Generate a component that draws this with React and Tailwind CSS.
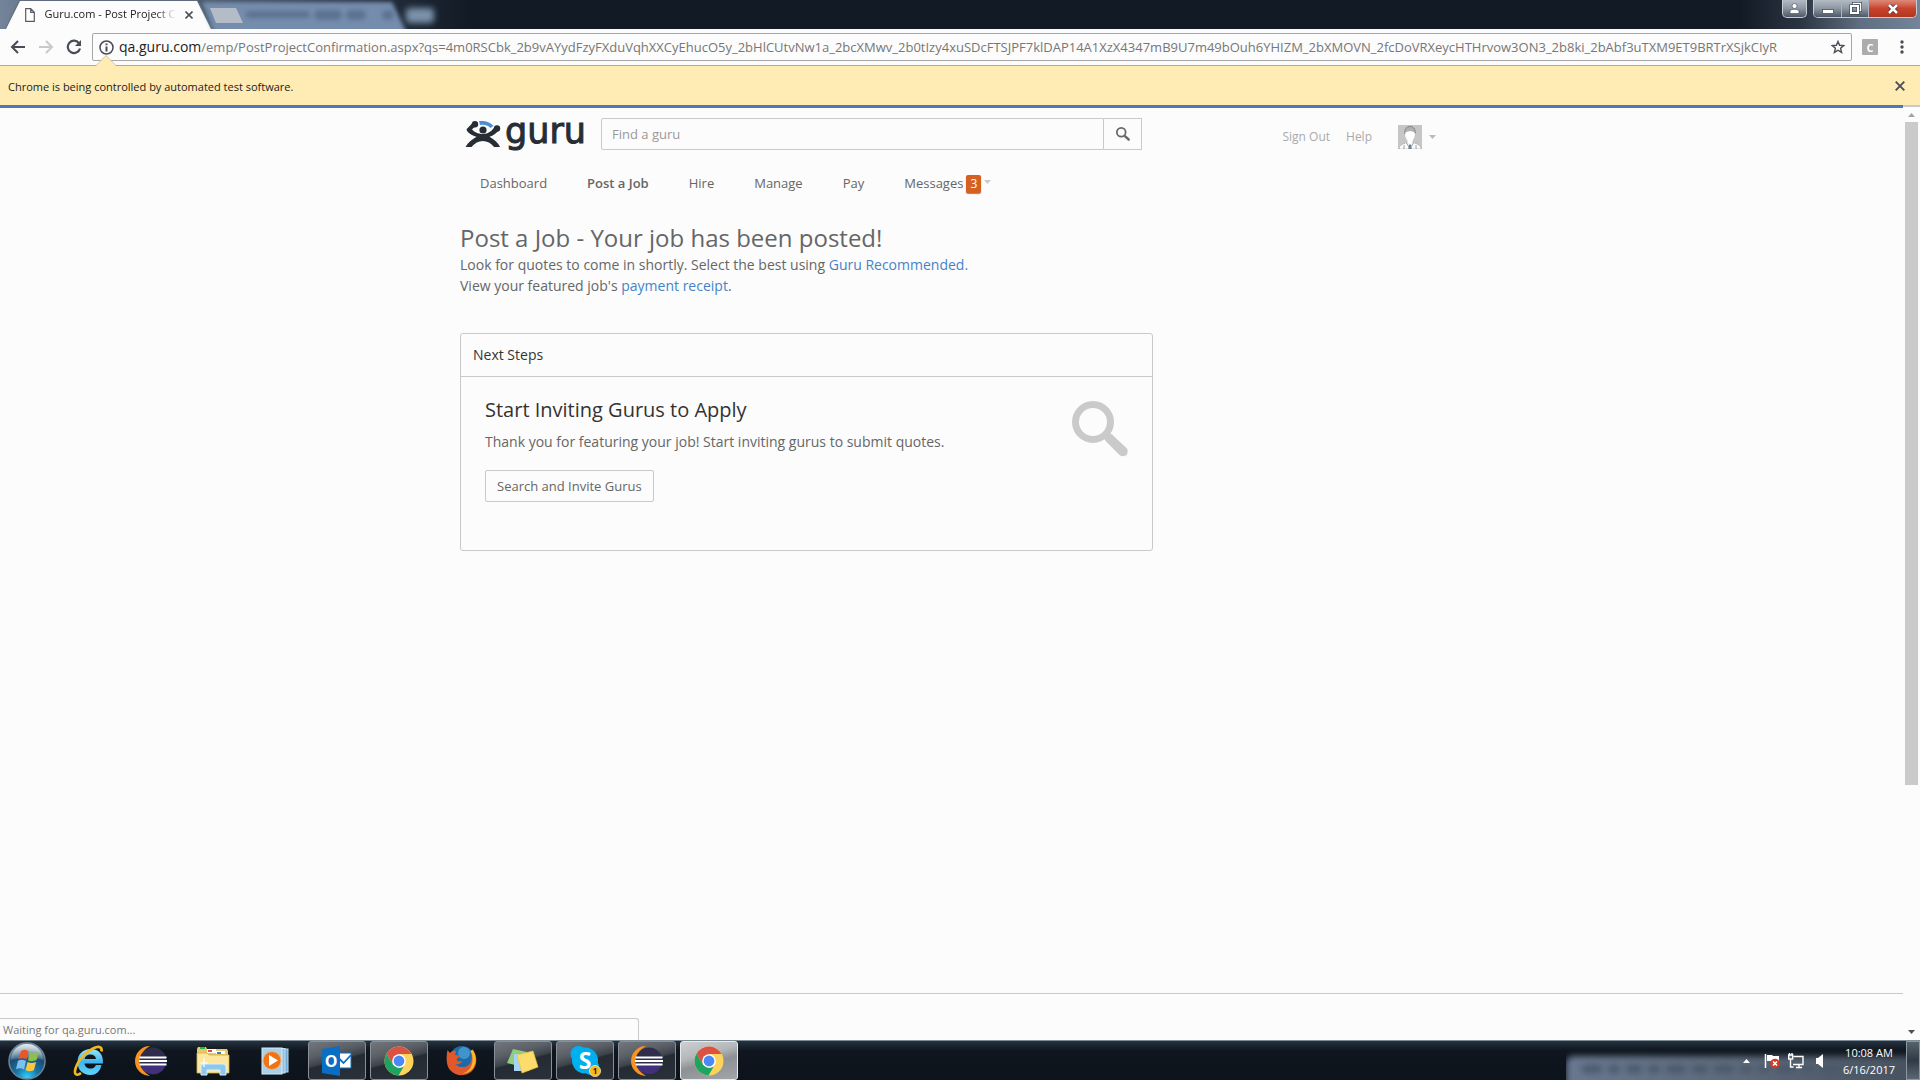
import React from "react";

const uiFont = "font-['Open_Sans','Noto_Sans',sans-serif]";

function Caret({ className = "" }) {
  return (
    <svg className={className} width="7" height="4" viewBox="0 0 7 4" aria-hidden="true">
      <path d="M0 0h7L3.500 4z" fill="currentColor" />
    </svg>
  );
}

function WindowButtons() {
  const glass =
    "flex items-center justify-center bg-gradient-to-b from-[#b4bcc4] via-[#8c96a2] to-[#4d5866]";
  return (
    <div className="flex items-start gap-[6px] pr-[3px]">
      <button
        aria-label="Profile"
        className={`h-[18px] w-[25px] rounded-b-[5px] border border-t-0 border-[#c5cdd6] ${glass}`}
      >
        <svg width="11" height="11" viewBox="0 0 11 11" fill="#fff" stroke="#3d4856" strokeWidth=".6">
          <circle cx="5.500" cy="3" r="2.500" />
          <path d="M1 10.500V8.500C1 7 3 6.300 5.500 6.300S10 7 10 8.500v2z" />
        </svg>
      </button>
      <div className="flex h-[18px] overflow-hidden rounded-b-[5px] border border-t-0 border-[#c5cdd6]">
        <button aria-label="Minimize" className={`w-7 border-r border-[#a9b3bd] ${glass}`}>
          <svg width="12" height="12" viewBox="0 0 12 12">
            <rect x=".500" y="6.500" width="11" height="4" fill="#fff" stroke="#47525f" strokeWidth=".8" />
          </svg>
        </button>
        <button aria-label="Restore" className={`w-[27px] border-r border-[#a9b3bd] ${glass}`}>
          <svg width="13" height="13" viewBox="0 0 13 13" fill="none">
            <path d="M4.500 3V1.500h7v7H10" stroke="#3d4856" strokeWidth="3" />
            <path d="M4.500 3V1.500h7v7H10" stroke="#fff" strokeWidth="1.500" />
            <rect x="2" y="4" width="7" height="7" stroke="#3d4856" strokeWidth="3.200" />
            <rect x="2" y="4" width="7" height="7" stroke="#fff" strokeWidth="2" />
          </svg>
        </button>
        <button
          aria-label="Close"
          className="flex w-[47px] items-center justify-center bg-gradient-to-b from-[#dc8a78] via-[#c8432d] to-[#b3361f]"
        >
          <svg width="12" height="10" viewBox="0 0 12 10">
            <path d="M2 1l8 8M10 1L2 9" stroke="#4a2a2a" strokeWidth="4" />
            <path d="M2 1l8 8M10 1L2 9" stroke="#fff" strokeWidth="2.600" />
          </svg>
        </button>
      </div>
    </div>
  );
}

function TabStrip() {
  return (
    <div className="flex h-[29px] items-stretch overflow-hidden bg-[linear-gradient(90deg,#74859b_0px,#65758a_30px,#4a5868_210px,#222c3a_390px,#121a25_470px,#121a25_calc(100%_-_180px),#2b3441_calc(100%_-_120px),#5f6e80_calc(100%_-_60px),#74859a_100%)]">
      <div className="ml-[5px] flex w-[207px] flex-none items-stretch bg-[#5f6c7d] [clip-path:polygon(0_100%,14px_0,193px_0,100%_100%)]">
        <div className="flex w-full items-center justify-between bg-[#fcfcfc] pl-5 pr-[19px] [clip-path:polygon(1px_100%,15px_1px,192px_1px,206px_100%)]">
          <svg className="flex-none" width="10" height="14" viewBox="0 0 10 14" fill="#fff" stroke="#555b66" strokeWidth="1.200">
            <path d="M.700.700h5l3.600 3.600v9H.700zM5.700.700v3.600h3.600" />
          </svg>
          <span className="whitespace-nowrap text-[11px] text-[#222] [mask-image:linear-gradient(90deg,#000_85%,transparent_100%)]">
            Guru.com - Post Project C
          </span>
          <button aria-label="Close tab" className="flex-none">
            <svg width="8" height="8" viewBox="0 0 8 8" stroke="#4c525c" strokeWidth="1.600">
              <path d="M.500.500l7 7M7.500.500l-7 7" />
            </svg>
          </button>
        </div>
      </div>
      <div className="relative -ml-[10px] w-[205px] flex-none">
        <div className="absolute inset-x-0 -bottom-1 top-[2px] blur-[2px]">
          <div className="h-full bg-[#758dad] [clip-path:polygon(0_0,190px_0,100%_100%,12px_100%)]" />
        </div>
        <div className="relative flex h-full items-center gap-1 pl-[44px] text-[#5d7392] blur-[2px]">
          <div className="h-[7px] w-16 rounded-full bg-current" />
          <div className="h-[10px] w-7 rounded-full bg-current" />
          <div className="h-[10px] w-5 rounded-full bg-current" />
          <div className="ml-3 h-[10px] w-3 rounded-full bg-current" />
        </div>
        <button
          aria-label="New tab"
          className="absolute left-[8px] top-[8px] h-[15px] w-[33px] bg-[#b4bcc8] [clip-path:polygon(0_0,26px_0,100%_100%,6px_100%)]"
        />
      </div>
      <div className="-ml-[1px] mt-[8px] h-[15px] w-7 flex-none rounded bg-[#7b92ab] blur-[3px]" />
      <div className="flex-1" />
      <WindowButtons />
    </div>
  );
}

function Toolbar() {
  return (
    <div className="flex h-[37px] items-center border-b border-[#a9a9a9] bg-[#fcfcfc] pr-2">
      <button aria-label="Back" className="ml-[10px]">
        <svg width="16" height="14" viewBox="0 0 16 14" fill="none" stroke="#474c57" strokeWidth="2">
          <path d="M15 7H2M8 1L2 7l6 6" />
        </svg>
      </button>
      <button aria-label="Forward" className="ml-3">
        <svg width="16" height="14" viewBox="0 0 16 14" fill="none" stroke="#c9c9c9" strokeWidth="2">
          <path d="M1 7h13M8 1l6 6-6 6" />
        </svg>
      </button>
      <button aria-label="Reload" className="ml-3">
        <svg width="16" height="16" viewBox="0 0 16 16" fill="none" stroke="#474c57" strokeWidth="2.200">
          <path d="M13.200 4.500A6.200 6.200 0 1 0 14 9.500" />
          <path d="M15 1v6H9z" fill="#474c57" stroke="none" />
        </svg>
      </button>
      <div className="ml-[10px] flex h-7 min-w-0 flex-1 items-center rounded-[2px] border border-[#a6a6a6] px-[6px]">
        <svg className="flex-none" width="15" height="15" viewBox="0 0 15 15" fill="none" stroke="#474c57">
          <circle cx="7.500" cy="7.500" r="6.500" strokeWidth="1.500" />
          <path d="M7.500 3.500v1.800M7.500 6.500v5" strokeWidth="2" />
        </svg>
        <label className="ml-[5px] flex min-w-0 flex-1 items-baseline text-[14px] text-[#222]">
          qa.guru.com
          <input
            className="min-w-0 flex-1 bg-transparent text-[13px] text-[#777] outline-none"
            defaultValue="/emp/PostProjectConfirmation.aspx?qs=4m0RSCbk_2b9vAYydFzyFXduVqhXXCyEhucO5y_2bHlCUtvNw1a_2bcXMwv_2b0tIzy4xuSDcFTSJPF7klDAP14A1XzX4347mB9U7m49bOuh6YHIZM_2bXMOVN_2fcDoVRXeycHTHrvow3ON3_2b8ki_2bAbf3uTXM9ET9BRTrXSjkCIyR"
          />
        </label>
        <button aria-label="Bookmark this page" className="ml-[9px] flex-none">
          <svg width="14" height="14" viewBox="0 0 14 14" fill="none" stroke="#474c57" strokeWidth="1.400">
            <path d="M7 1.500l1.600 3.800 4.200.3-3.200 2.700 1 4.100L7 10.200l-3.600 2.200 1-4.100L1.200 5.600l4.200-.3z" />
          </svg>
        </button>
      </div>
      <button
        aria-label="Extension"
        className="ml-[10px] flex size-4 items-center justify-center rounded-[1px] bg-[#acacac] text-[11px] font-bold leading-none text-white"
      >
        C
      </button>
      <button aria-label="Menu" className="ml-[14px] flex w-5 justify-center">
        <svg width="4" height="14" viewBox="0 0 4 14" fill="#474c57">
          <circle cx="2" cy="2" r="1.700" />
          <circle cx="2" cy="7" r="1.700" />
          <circle cx="2" cy="12" r="1.700" />
        </svg>
      </button>
    </div>
  );
}

function InfoBar() {
  return (
    <div className="relative flex h-[39px] items-center justify-between bg-[#ffebb4] pl-2 pr-[15px]">
      <svg className="absolute -top-[11px] left-[96px]" width="20" height="11" viewBox="0 0 20 11">
        <path d="M0 11L10 0l10 11z" fill="#ffebb4" />
        <path d="M0 10.500L10 .500l10 10" fill="none" stroke="#c9bd9c" strokeWidth=".8" />
      </svg>
      <span className="pt-[3px] text-[11px] text-[#222]">Chrome is being controlled by automated test software.</span>
      <button aria-label="Dismiss">
        <svg width="10" height="10" viewBox="0 0 10 10" stroke="#474c57" strokeWidth="1.800">
          <path d="M.700.700l8.600 8.600M9.300.700L.700 9.300" />
        </svg>
      </button>
    </div>
  );
}

function GuruLogo() {
  return (
    <a href="#home" aria-label="guru home" className="flex h-[34px] w-[125px] flex-none items-center">
      <svg className="flex-none" width="36" height="27" viewBox="0 0 36 27" fill="#262d35">
        <path d="M14 0c6-.6 11 1.300 14.500 4.800L25.500 7C23 4.500 19 3.300 15 4z" fill="#4a8fd6" />
        <circle cx="18" cy="9" r="3.600" />
        <circle cx="10" cy="3.300" r="3.200" />
        <circle cx="32" cy="7.500" r="3.200" />
        <path d="M8 1.500L1.500 8.200c.5 3.300 5.500 6.200 10 7.500C7.500 18 3 21.500.500 26h6c3.200-3.700 7-6 11.300-6s8.300 2.300 11.300 6h6C33 21.500 28.500 18 24.500 15.700c3.500-1.200 7-3 9.500-7l-4-3.200C27.500 9.500 23 13 18 13S8.300 10.500 7 8.200l5-4z" />
      </svg>
      <span className="ml-1 h-[34px] font-['DejaVu_Sans',sans-serif] text-[35px] leading-[29px] text-[#262d35] [-webkit-text-stroke:1px_#262d35]">
        guru
      </span>
    </a>
  );
}

function Avatar() {
  return (
    <svg width="24" height="24" viewBox="0 0 24 24" aria-hidden="true">
      <rect width="24" height="24" fill="#c6c6c6" />
      <path d="M1 24c0-4 4-5 8-6.500L12 19l3-1.500c4 1.500 8 2.500 8 6.500z" fill="#fcfcfc" stroke="#8b8b8b" strokeWidth=".7" strokeDasharray="1.500 1" />
      <path d="M7 9c-1-5 1.500-7.500 5-7.500S18 4 17 9" fill="#b0b0b0" stroke="#777" strokeWidth="1" strokeDasharray="1.500 .6" />
      <path d="M7.500 7.500C10 6 14 5.500 16.500 7.500c1 3-.5 6.500-2 8v2.500L12 20l-2.500-2v-2.500c-1.500-1.500-3-5-2-8z" fill="#fff" />
      <path d="M11 19.500h2l.8 4.500h-3.600z" fill="#71839a" />
      <path d="M6 20v4M18 20v4M8.500 18l2.500 4M15.500 18L13 22" stroke="#888" strokeWidth=".8" />
    </svg>
  );
}

function Magnifier({ size, className }) {
  return (
    <svg className={className} width={size} height={size} viewBox="0 0 56 56" aria-hidden="true">
      <circle cx="21" cy="21" r="17.500" fill="none" stroke="currentColor" strokeWidth="7" />
      <path d="M32 37l5-5 3 1.500L54.500 47c1.500 1.500 1.500 4 .5 6.200-2 2.500-5.500 2.500-7.500.8L34 40.500z" fill="currentColor" />
    </svg>
  );
}

const navItems = ["Dashboard", "Post a Job", "Hire", "Manage", "Pay"];

function GuruPage() {
  return (
    <div className="relative flex min-w-0 flex-1 flex-col border-t-[3px] border-[#4a7ab8] bg-[#fcfcfc] text-[#666]">
      <div className="mx-auto w-full max-w-[983px] flex-1">
        <header>
          <div className="flex h-[52px] items-center pr-[7px]">
            <div className="ml-[5px]">
              <GuruLogo />
            </div>
            <form className="ml-[11px] flex h-8 w-[541px]" onSubmit={(e) => e.preventDefault()}>
              <input
                aria-label="Find a guru"
                placeholder="Find a guru"
                className="min-w-0 flex-1 rounded-l-[2px] border border-[#c9c9c9] bg-transparent pl-[10px] pt-px text-[13px] outline-none placeholder:text-[#999]"
              />
              <button
                aria-label="Search"
                className="flex w-[38px] items-center justify-center border border-l-0 border-[#c9c9c9] text-[#666]"
              >
                <Magnifier size={14} />
              </button>
            </form>
            <div className="ml-auto flex items-center pt-[6px] text-[12px] text-[#aaa]">
              <a href="#signout">Sign Out</a>
              <a href="#help" className="ml-4">Help</a>
              <button aria-label="Account" className="ml-[26px] flex items-center">
                <Avatar />
                <Caret className="ml-[7px] text-[#bbb]" />
              </button>
            </div>
          </div>
          <nav className="flex h-[47px] items-center text-[13px]">
            {navItems.map((item) => (
              <a
                key={item}
                href="#nav"
                className={item === "Post a Job" ? "px-5 font-semibold" : "px-5"}
              >
                {item}
              </a>
            ))}
            <a href="#messages" className="flex items-center pl-5">
              Messages
              <span className="ml-[3px] flex h-[18px] w-[15px] items-center justify-center rounded-[2px] bg-[#d5601f] text-[12px] text-white shadow-[0_1px_1px_#888]">
                3
              </span>
              <Caret className="mb-1 ml-[3px] text-[#c9c9c9]" />
            </a>
          </nav>
        </header>
        <main>
          <h1 className="mt-[15px] text-[24px] leading-8">Post a Job - Your job has been posted!</h1>
          <div className="text-[14px] leading-[21px]">
            <p>
              Look for quotes to come in shortly. Select the best using{" "}
              <a href="#recommended" className="text-[#4583c8]">Guru Recommended.</a>
            </p>
            <p>
              View your featured job's{" "}
              <a href="#receipt" className="text-[#4583c8]">payment receipt</a>.
            </p>
          </div>
          <section className="mt-[37px] min-h-[218px] w-[693px] max-w-full rounded-[3px] border border-[#c9c9c9]">
            <h2 className="flex h-[43px] items-center border-b border-[#c9c9c9] px-3 pb-[2px] text-[14px] text-[#333]">
              Next Steps
            </h2>
            <div className="flex items-start justify-between px-6 pt-[17px]">
              <div>
                <h3 className="text-[20px] leading-8 text-[#333]">Start Inviting Gurus to Apply</h3>
                <p className="mt-[5px] text-[14px] leading-[21px]">
                  Thank you for featuring your job! Start inviting gurus to submit quotes.
                </p>
                <button className="mt-[18px] h-8 rounded-[2px] border border-[#c9c9c9] px-[11px] pt-px text-[13px]">
                  Search and Invite Gurus
                </button>
              </div>
              <Magnifier size={56} className="mt-[7px] text-[#cacaca]" />
            </div>
          </section>
        </main>
      </div>
      <footer className="h-[47px] flex-none border-t border-[#c9c9c9]" />
      <div className="absolute bottom-0 left-0 flex h-[22px] w-[639px] items-center rounded-tr-[3px] border-r border-t border-[#c9c9c9] bg-[#fcfcfc] pl-[3px] pt-[2px] text-[11px] text-[#777]">
        Waiting for qa.guru.com...
      </div>
    </div>
  );
}

function ScrollBar() {
  return (
    <div className="flex w-[17px] flex-none flex-col items-center border-t-2 border-[#c9c9c9] bg-[#fcfcfc] py-[6px]">
      <Caret className="rotate-180 text-[#a5a5a5]" />
      <div className="mt-[5px] flex w-full flex-1 flex-col px-[2px]">
        <div className="basis-[73%] bg-[#cacaca]" />
      </div>
      <Caret className="text-[#505050]" />
    </div>
  );
}

function StartOrb() {
  return (
    <svg width="38" height="38" viewBox="0 0 38 38">
      <defs>
        <radialGradient id="orb" cx=".5" cy=".95" r=".9">
          <stop offset="0" stopColor="#2fd0ff" />
          <stop offset=".35" stopColor="#1776a8" />
          <stop offset=".7" stopColor="#1b4a70" />
          <stop offset="1" stopColor="#8ea7b8" />
        </radialGradient>
        <linearGradient id="orbShine" x2="0" y2="1">
          <stop offset="0" stopColor="#fff" stopOpacity=".75" />
          <stop offset="1" stopColor="#fff" stopOpacity=".15" />
        </linearGradient>
      </defs>
      <circle cx="19" cy="19" r="18" fill="url(#orb)" stroke="#6b8497" strokeWidth="1.500" />
      <path d="M3 18a16 16 0 0 1 32 0c-10-3-22-3-32 0z" fill="url(#orbShine)" />
      <path d="M13 9c3-1.800 5-1.300 7.500.2L18.500 17.500c-2.500-1.600-5-1.700-8-.5z" fill="#e8572b" />
      <path d="M21.800 10c3 1.600 5.500 1.500 9-.2L28.600 18c-3.500 1.500-6 1.500-8.600.2z" fill="#8cc04b" />
      <path d="M10 18.700c3-1.300 5.500-1 8 .4l-2 8.400c-2.600-1.700-5-1.800-8-.3z" fill="#7fc0ee" />
      <path d="M19.600 19.900c2.600 1.400 5 1.400 8.500.1l-2.200 8.200c-3.200 1.500-6 1.300-8.400-.2z" fill="#fbc63f" />
    </svg>
  );
}

function IeIcon() {
  return (
    <svg width="32" height="32" viewBox="0 0 32 32" fill="none">
      <defs>
        <linearGradient id="ie" x2="0" y2="1">
          <stop offset="0" stopColor="#9be4fb" />
          <stop offset=".5" stopColor="#3fb4ee" />
          <stop offset="1" stopColor="#62d3fa" />
        </linearGradient>
      </defs>
      <path d="M28.500 20H23c-1 2.500-3 3.600-5.500 3.600-3.300 0-5.700-2-6-5.100h18.400C30.600 9.500 26 4 17.600 4 10.500 4 4.500 9 4.500 17S10 30 17.500 30c5.700 0 9.500-3.300 11-10zM11.600 14c.6-2.800 2.700-4.500 5.800-4.500 3.200 0 5.300 1.700 5.600 4.500z" fill="url(#ie)" />
      <path d="M8 28c-3.500 3-6.500 2-6-2C3 18 11 8 20 3.500c5-2.500 9.500-2.500 8.500 3" stroke="#f3b81c" strokeWidth="2.600" />
    </svg>
  );
}

function EclipseIcon() {
  return (
    <svg width="32" height="30" viewBox="0 0 32 30">
      <path d="M15 0A15 15 0 0 0 15 30 17 17 0 0 1 15 0z" fill="#f7931e" />
      <circle cx="18" cy="15" r="13.500" fill="#2f2c4c" />
      <path d="M6 20h24a13 13 0 0 1-24 0z" fill="#42307d" />
      <path d="M4.500 11.500h27M4 15h28M4.500 18.500h27" stroke="#fff" strokeWidth="1.800" />
    </svg>
  );
}

function FolderIcon() {
  return (
    <svg width="34" height="32" viewBox="0 0 34 32">
      <path d="M1 4l1-2h8l1 2h20l1 2v22H1z" fill="#e7c768" />
      <path d="M4 2h5v2H4z" fill="#26b33f" />
      <path d="M11 4h9v4h-9z" fill="#fff" />
      <path d="M12 5h4v2h-4z" fill="#e0532a" />
      <path d="M20 6h9v3h-9z" fill="#fff" />
      <path d="M21 7h4v2h-4z" fill="#2b84d0" />
      <path d="M1 8h10l2 2h20v18H1z" fill="#fbe79d" stroke="#d5b04d" strokeWidth=".8" />
      <path d="M5 30V21q0-2 2-2h20q3 0 3 3v8h-6v-5H11v5z" fill="#8cc7ee" stroke="#d8f0ff" strokeWidth="1" />
      <path d="M8 13v9M4 18h8" stroke="#fff" strokeWidth="1.200" />
    </svg>
  );
}

function PlayerIcon() {
  return (
    <svg width="28" height="28" viewBox="0 0 28 28">
      <rect x="10" y="2" width="17" height="23" fill="#6fa9cf" stroke="#b9dcef" />
      <rect x="6" y="1.500" width="18" height="24.500" fill="#8ebfe0" stroke="#c4e2f3" />
      <rect x="1" y="1" width="20" height="26" fill="#a9d0ea" stroke="#d8edf8" />
      <circle cx="11" cy="13.500" r="9" fill="#ee7417" stroke="#f9b06b" strokeWidth="1" />
      <path d="M8 8l9 5.500L8 19z" fill="#fff" />
    </svg>
  );
}

function OutlookIcon() {
  return (
    <svg width="32" height="32" viewBox="0 0 32 32">
      <path d="M17 8h13v15H17z" fill="#fff" stroke="#0a6ec5" />
      <path d="M17.500 13l5 5 7.500-8" fill="none" stroke="#0a6ec5" strokeWidth="1.800" />
      <path d="M1 4l18-3v30L1 28z" fill="#0a6ec5" />
      <text x="10" y="22" textAnchor="middle" fontSize="16" fontWeight="700" fill="#fff" fontFamily="Open Sans, sans-serif">
        O
      </text>
    </svg>
  );
}

function ChromeIcon() {
  return (
    <svg width="30" height="30" viewBox="0 0 30 30">
      <circle cx="15" cy="15" r="14.500" fill="#fdd35c" />
      <path d="M2.500 7.700A14.500 14.500 0 0 1 27.600 8H15L8.900 18.500z" fill="#dd5144" />
      <path d="M2.500 7.700l6.400 10.900L15 22l4.500-1-5 8.500A14.500 14.500 0 0 1 2.500 7.700z" fill="#1da462" />
      <circle cx="15" cy="15" r="6.800" fill="#fff" />
      <circle cx="15" cy="15" r="5.400" fill="#4a8af4" />
    </svg>
  );
}

function FirefoxIcon() {
  return (
    <svg width="31" height="31" viewBox="0 0 31 31">
      <circle cx="16" cy="13.500" r="12.500" fill="#1d6aa8" />
      <circle cx="18" cy="8" r="6" fill="#4ea8d8" opacity=".7" />
      <path d="M27 5c4 5 4.500 13 1 18.500-5 8-17 9-23.500 2C0 21 0 12 1.500 5L4 8c1.500-1.500 4-2.500 6-2l-1 4c1.500 0 4 .3 4.500 1.300-.5 1.700-3 2-3 3.700 1.500 2 3.500 1.500 6 .7-1 3-5 4-7 3.500 5 5 14 3.500 16-4C26 11 25.500 8 24 6l3 1z" fill="#e1592a" />
      <path d="M26.500 4.500c4.500 6 4.500 15-1 20.500-3 2.500-6 3.500-9 3.500 6-1.500 10-7 10-13 .2-4-.5-7-2-9.500z" fill="#fbb62c" />
    </svg>
  );
}

function NotesIcon() {
  return (
    <svg width="34" height="28" viewBox="0 0 34 28">
      <path d="M7 2l14 3-4 15L1 16z" fill="#8fce7c" />
      <path d="M8 7h15v17H8z" fill="#a5d4f7" />
      <path d="M11 8l16-4 5 16-16 6z" fill="#fcdc6b" stroke="#eebf3c" strokeWidth=".7" />
    </svg>
  );
}

function SkypeIcon() {
  return (
    <svg width="32" height="32" viewBox="0 0 32 32">
      <circle cx="16" cy="15.500" r="13" fill="#00aff0" />
      <circle cx="9.500" cy="9" r="8" fill="#00aff0" />
      <circle cx="22" cy="22" r="8" fill="#00aff0" />
      <text x="16" y="24" textAnchor="middle" fontSize="23" fontWeight="700" fill="#fff" fontFamily="Open Sans, sans-serif">
        S
      </text>
      <circle cx="26" cy="26" r="5.600" fill="#fbb81b" stroke="#fff" strokeWidth=".6" />
      <text x="26" y="29" textAnchor="middle" fontSize="8" fontWeight="700" fill="#222" fontFamily="Open Sans, sans-serif">
        1
      </text>
    </svg>
  );
}

const apps = [
  { name: "Internet Explorer", Icon: IeIcon },
  { name: "Eclipse", Icon: EclipseIcon },
  { name: "File Explorer", Icon: FolderIcon },
  { name: "Media Player", Icon: PlayerIcon },
  { name: "Outlook", Icon: OutlookIcon, state: "open" },
  { name: "Chrome", Icon: ChromeIcon, state: "open" },
  { name: "Firefox", Icon: FirefoxIcon },
  { name: "Sticky Notes", Icon: NotesIcon, state: "open" },
  { name: "Skype", Icon: SkypeIcon, state: "open" },
  { name: "Eclipse workspace", Icon: EclipseIcon, state: "open" },
  { name: "Chrome test window", Icon: ChromeIcon, state: "active" },
];

const appStyles = {
  idle: "border-transparent",
  open: "border-[#8a9097] bg-[linear-gradient(165deg,#73777c_0%,#5b6067_30%,#3d434b_48%,#252b33_52%,#2b3139_100%)]",
  active: "border-[#e8eaec] bg-[linear-gradient(165deg,#cdcfd0_0%,#b5b8ba_35%,#8d9195_55%,#a2a6a9_100%)]",
};

function Tray() {
  const smudges = ["w-5", "w-3", "w-4", "w-3", "w-5", "w-4", "w-5", "w-3", "w-3", "w-5", "w-3", "w-5", "w-3"];
  return (
    <div className="relative flex w-[354px] flex-none items-center justify-end overflow-hidden">
      <div className="absolute -bottom-2 left-0 right-0 top-[15px] rounded-tl-lg bg-gradient-to-r from-[#697890] via-[#5d6a7a] to-[#46515e] blur-[3px]" />
      <div className="absolute bottom-[7px] left-4 flex gap-[6px] blur-[3px]">
        {smudges.map((w, i) => (
          <div key={i} className={`h-2 rounded-full bg-[#4a586b] ${w}`} />
        ))}
      </div>
      <div className="relative flex h-full items-center">
        <button aria-label="Show hidden icons" className="text-white">
          <Caret className="rotate-180" />
        </button>
        <button aria-label="Action Center" className="ml-[14px]">
          <svg width="16" height="16" viewBox="0 0 16 16">
            <path d="M1.500 1v14" stroke="#fff" strokeWidth="1.500" />
            <path d="M3 2h5l1 1h6v6H9L8 8H3z" fill="#fff" />
            <circle cx="11" cy="10.500" r="4.800" fill="#d23a22" />
            <path d="M9 8.500l4 4M13 8.500l-4 4" stroke="#fff" strokeWidth="1.600" />
          </svg>
        </button>
        <button aria-label="Network" className="ml-2">
          <svg width="16" height="16" viewBox="0 0 16 16" fill="none" stroke="#fff" strokeWidth="1.400">
            <path d="M5.500 3.500H15v8H5M8 14.500h6M11 12v2M2.500 6v8h3" />
            <path d="M.700 2h4v4h-4zM1.500 0v2M4 0v2" fill="#5b6876" />
          </svg>
        </button>
        <button aria-label="Volume" className="ml-3">
          <svg width="8" height="14" viewBox="0 0 8 14" fill="#fff">
            <path d="M0 4h2l5-4v14l-5-4H0z" />
          </svg>
        </button>
        <div className="ml-[18px] w-[54px] text-center text-[11px] leading-[17px] text-white">
          <div>10:08 AM</div>
          <div>6/16/2017</div>
        </div>
        <button
          aria-label="Show desktop"
          className="ml-[10px] h-full w-[14px] border border-[#8a98a3] bg-gradient-to-b from-[#56626c] via-[#303a45] to-[#5b6874]"
        />
      </div>
    </div>
  );
}

function Taskbar() {
  return (
    <div className="flex h-10 flex-none items-stretch border-t border-[#7d8c97] bg-gradient-to-b from-[#26333f] from-0% via-[#0f161f] via-25% to-[#0d131b]">
      <button aria-label="Start" className="flex w-[54px] flex-none items-center justify-center">
        <StartOrb />
      </button>
      <div className="ml-[6px] flex gap-1">
        {apps.map(({ name, Icon, state = "idle" }) => (
          <button
            key={name}
            aria-label={name}
            className={`flex w-[58px] items-center justify-center rounded-[3px] border ${appStyles[state]}`}
          >
            <Icon />
          </button>
        ))}
      </div>
      <div className="flex-1" />
      <Tray />
    </div>
  );
}

export default function App() {
  return (
    <div className={`flex min-h-screen flex-col bg-[#fcfcfc] ${uiFont}`}>
      <TabStrip />
      <Toolbar />
      <InfoBar />
      <div className="flex flex-1 items-stretch">
        <GuruPage />
        <ScrollBar />
      </div>
      <Taskbar />
    </div>
  );
}
